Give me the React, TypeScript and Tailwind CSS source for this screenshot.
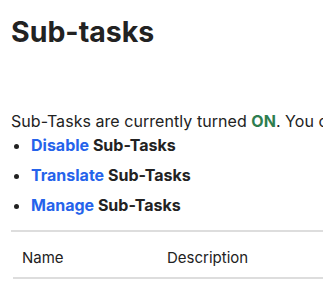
export default function App() {
  const items = [
    { link: 'Disable', rest: 'Sub-Tasks' },
    { link: 'Translate', rest: 'Sub-Tasks' },
    { link: 'Manage', rest: 'Sub-Tasks' },
  ];

  return (
    <div className="min-h-screen overflow-hidden bg-white pl-[11px] text-[#222] font-['Inter',sans-serif]">
      <h1 className="pt-[14px] text-[28.5px] font-bold leading-[35px] text-[#222]">Sub-tasks</h1>

      <p className="mt-[60px] whitespace-nowrap text-[16px] leading-[24px] tracking-[0.05px]">
        Sub-Tasks are currently turned <span className="font-bold text-[#2e7d4f]">ON</span>. You can manage
        Sub-Tasks as part of issue type schemes.
      </p>

      <ul className="list-disc space-y-[6px] pl-[20px] text-[16px] leading-[24px] font-bold">
        {items.map((item) => (
          <li key={item.link}>
            <a href="#" className="text-[#2563eb]">
              {item.link}
            </a>{' '}
            {item.rest}
          </li>
        ))}
      </ul>

      {/* Table header */}
      <div className="mt-[13px] border-t-2 border-[#dddddd]">
        <div className="ml-[2px] flex border-b-2 border-[#dddddd] pt-[15px] pb-[8px] text-[15px] leading-[22px] text-[#222]">
          <div className="w-[154px] pl-[9px]">Name</div>
          <div>Description</div>
        </div>
      </div>
    </div>
  );
}
